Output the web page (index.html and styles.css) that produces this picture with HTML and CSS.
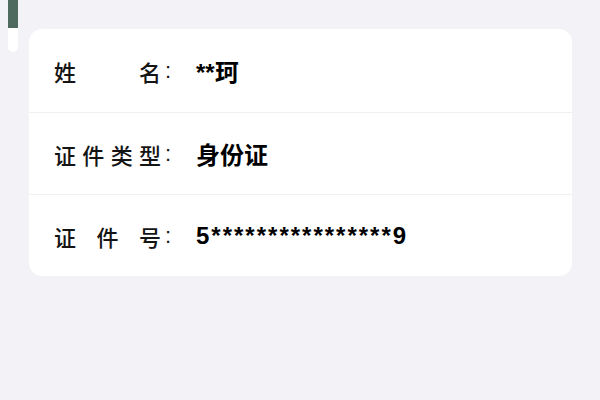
FILE: index.html
```html
<!DOCTYPE html>
<html lang="zh-CN">
<head>
<meta charset="utf-8">
<link rel="stylesheet" href="styles.css">
</head>
<body>
<div class="handle"><div class="handle-top"></div></div>
<div class="card">
  <div class="row">
    <span class="lab">姓名</span><span class="colon">:</span><span class="val">**珂</span>
  </div>
  <div class="row">
    <span class="lab">证件类型</span><span class="colon">:</span><span class="val">身份证</span>
  </div>
  <div class="row">
    <span class="lab">证件号</span><span class="colon">:</span><span class="val id">5****************9</span>
  </div>
</div>
</body>
</html>
```
FILE: styles.css
```css
html, body {
  margin: 0;
  padding: 0;
  background: #f2f2f7;
  width: 600px;
  height: 400px;
  overflow: hidden;
}
body {
  font-family: "Liberation Sans", "Noto Sans CJK SC", sans-serif;
  padding-top: 29px;
  box-sizing: border-box;
  position: relative;
}
.handle {
  position: absolute;
  left: 8px;
  top: 0;
  width: 10px;
  height: 52px;
  background: #ffffff;
  border-radius: 0 0 5px 5px;
  overflow: hidden;
}
.handle-top {
  height: 28px;
  background: #4f6a5f;
}
.card {
  margin-left: 29px;
  width: 543px;
  background: #ffffff;
  border-radius: 13px;
  overflow: hidden;
}
.row {
  display: flex;
  align-items: center;
  height: 82px;
  padding-left: 25px;
  border-top: 1px solid #f1f1f3;
  box-sizing: border-box;
}
.row:first-child {
  border-top: none;
  height: 83px;
}
.lab {
  display: inline-block;
  width: 107px;
  font-family: "Noto Sans CJK SC", sans-serif;
  font-size: 22px;
  font-weight: 500;
  color: #141414;
  text-align: justify;
  text-align-last: justify;
}
.colon {
  margin-left: 4px;
  width: 6px;
  font-size: 22px;
  color: #141414;
}
.val {
  margin-left: 25px;
  font-size: 24px;
  font-weight: bold;
  color: #000;
}
.id {
  letter-spacing: 2px;
}
```
